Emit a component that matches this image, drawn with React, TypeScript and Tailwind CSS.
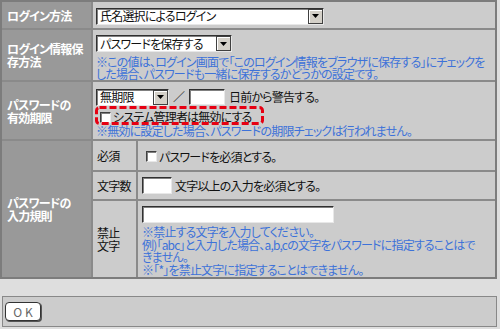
import React from "react";

const blue = "text-[#3d72d9]";

function Select({ label, className }: { label: string; className: string }) {
  return (
    <div
      className={`flex h-[17px] items-center bg-white border border-t-[#303030] border-l-[#303030] border-r-[#e8e8e8] border-b-[#e8e8e8] shadow-[inset_1px_1px_0_#808080] ${className}`}
    >
      <span className="flex-1 pl-[3px] text-[12px] leading-none text-[#111] whitespace-nowrap">{label}</span>
      <span className="flex h-[15px] w-[15px] items-center justify-center bg-[#d4d0c8] border border-[#404040] shadow-[inset_1px_1px_0_#fff]">
        <svg width="7" height="4" viewBox="0 0 7 4">
          <path d="M0 0h7L3.5 4z" fill="#000" />
        </svg>
      </span>
    </div>
  );
}

function Input({ className }: { className: string }) {
  return (
    <div
      className={`bg-white border border-t-[#303030] border-l-[#303030] border-r-[#e8e8e8] border-b-[#e8e8e8] shadow-[inset_1px_1px_0_#808080] ${className}`}
    />
  );
}

function Check() {
  return (
    <span className="inline-block h-[11px] w-[11px] shrink-0 bg-white border border-t-[#404040] border-l-[#404040] border-r-[#e8e8e8] border-b-[#e8e8e8] shadow-[inset_1px_1px_0_#808080]" />
  );
}

function Label({ children }: { children: React.ReactNode }) {
  return (
    <div className="flex w-[91px] shrink-0 items-center bg-[#999999] border-r-2 border-[#8a8a8a] pl-[5px] text-[12px] leading-[13px] font-bold text-white">
      <div>{children}</div>
    </div>
  );
}

export default function App() {
  return (
    <div className="h-[329px] w-[500px] bg-[#dedede] font-['Noto_Sans_CJK_JP',sans-serif] [font-feature-settings:'palt'] text-[12px] tracking-[-0.8px] text-[#111]">
      <div className="w-[497px] border-2 border-[#7c7c7c] bg-[#cccccc]">
        {/* ログイン方法 */}
        <div className="flex h-[28px] border-b-2 border-[#8a8a8a]">
          <Label>ログイン方法</Label>
          <div className="flex flex-1 items-center pl-[3px] pt-[2px]">
            <Select label="氏名選択によるログイン" className="w-[228px]" />
          </div>
        </div>

        {/* ログイン情報保存方法 */}
        <div className="flex h-[52px] border-b-2 border-[#8a8a8a]">
          <Label>
            ログイン情報保
            <br />
            存方法
          </Label>
          <div className="flex-1 pl-[3px] pt-[5px]">
            <Select label="パスワードを保存する" className="w-[136px]" />
            <p className={`mt-[4px] text-[12px] leading-[12px] whitespace-nowrap ${blue}`}>
              ※この値は、ログイン画面で「このログイン情報をブラウザに保存する」にチェックを
              <br />
              した場合、パスワードも一緒に保存するかどうかの設定です。
            </p>
          </div>
        </div>

        {/* パスワードの有効期限 */}
        <div className="flex h-[59px] border-b-2 border-[#8a8a8a]">
          <Label>
            パスワードの
            <br />
            有効期限
          </Label>
          <div className="relative flex-1 pl-[3px] pt-[6px]">
            <div className="flex items-center">
              <Select label="無期限" className="w-[73px]" />
              <span className="ml-[4px] w-[14px] text-[#333]">／</span>
              <Input className="ml-[2px] h-[16px] w-[36px]" />
              <span className="ml-[4px] whitespace-nowrap">日前から警告する。</span>
            </div>
            <div className="mt-[5px] flex h-[12px] items-center gap-[2px] pl-[4px]">
              <Check />
              <span className="whitespace-nowrap leading-[12px]">システム管理者は無効にする</span>
            </div>
            <p className={`mt-[2px] leading-[12px] whitespace-nowrap ${blue}`}>
              ※無効に設定した場合、パスワードの期限チェックは行われません。
            </p>
            {/* annotation */}
            <svg className="absolute left-[2px] top-[24px]" width="169" height="19" viewBox="0 0 169 19">
              <rect
                x="1.5"
                y="1.5"
                width="166"
                height="16"
                rx="3"
                fill="none"
                stroke="#e60012"
                strokeWidth="3"
                strokeDasharray="7 3"
              />
            </svg>
          </div>
        </div>

        {/* パスワードの入力規則 */}
        <div className="flex h-[136px]">
          <Label>
            パスワードの
            <br />
            入力規則
          </Label>
          <div className="flex flex-1 flex-col">
            <div className="flex h-[31px] border-b-2 border-[#8a8a8a]">
              <div className="flex w-[45px] items-center border-r-2 border-[#8a8a8a] pl-[4px]">必須</div>
              <div className="flex flex-1 items-center gap-[2px] pl-[8px] pt-[2px]">
                <Check />
                <span className="whitespace-nowrap">パスワードを必須とする。</span>
              </div>
            </div>
            <div className="flex h-[29px] border-b-2 border-[#8a8a8a]">
              <div className="flex w-[45px] items-center border-r-2 border-[#8a8a8a] pl-[4px]">文字数</div>
              <div className="flex flex-1 items-center pl-[4px]">
                <Input className="h-[17px] w-[30px]" />
                <span className="ml-[3px] whitespace-nowrap">文字以上の入力を必須とする。</span>
              </div>
            </div>
            <div className="flex flex-1">
              <div className="flex w-[45px] items-center border-r-2 border-[#8a8a8a] pl-[4px] leading-[13px]">
                <div>
                  禁止
                  <br />
                  文字
                </div>
              </div>
              <div className="flex-1 pl-[4px] pt-[5px]">
                <Input className="h-[17px] w-[192px]" />
                <p className={`mt-[3px] leading-[12.5px] whitespace-nowrap ${blue}`}>
                  ※禁止する文字を入力してください。
                  <br />
                  例)「abc」と入力した場合、a,b,cの文字をパスワードに指定することはで
                  <br />
                  きません。
                  <br />
                  ※「*」を禁止文字に指定することはできません。
                </p>
              </div>
            </div>
          </div>
        </div>
      </div>

      {/* OK */}
      <div className="ml-[2px] mt-[17px] flex h-[31px] w-[495px] items-center border border-[#888] bg-[#cccccc] pl-[2px]">
        <button className="flex h-[19px] w-[36px] items-center justify-center rounded-[4px] border border-[#333] bg-white text-[12px] tracking-[3px] pl-[3px] text-[#666] shadow-[1px_1px_0_#555]">
          OK
        </button>
      </div>
    </div>
  );
}
